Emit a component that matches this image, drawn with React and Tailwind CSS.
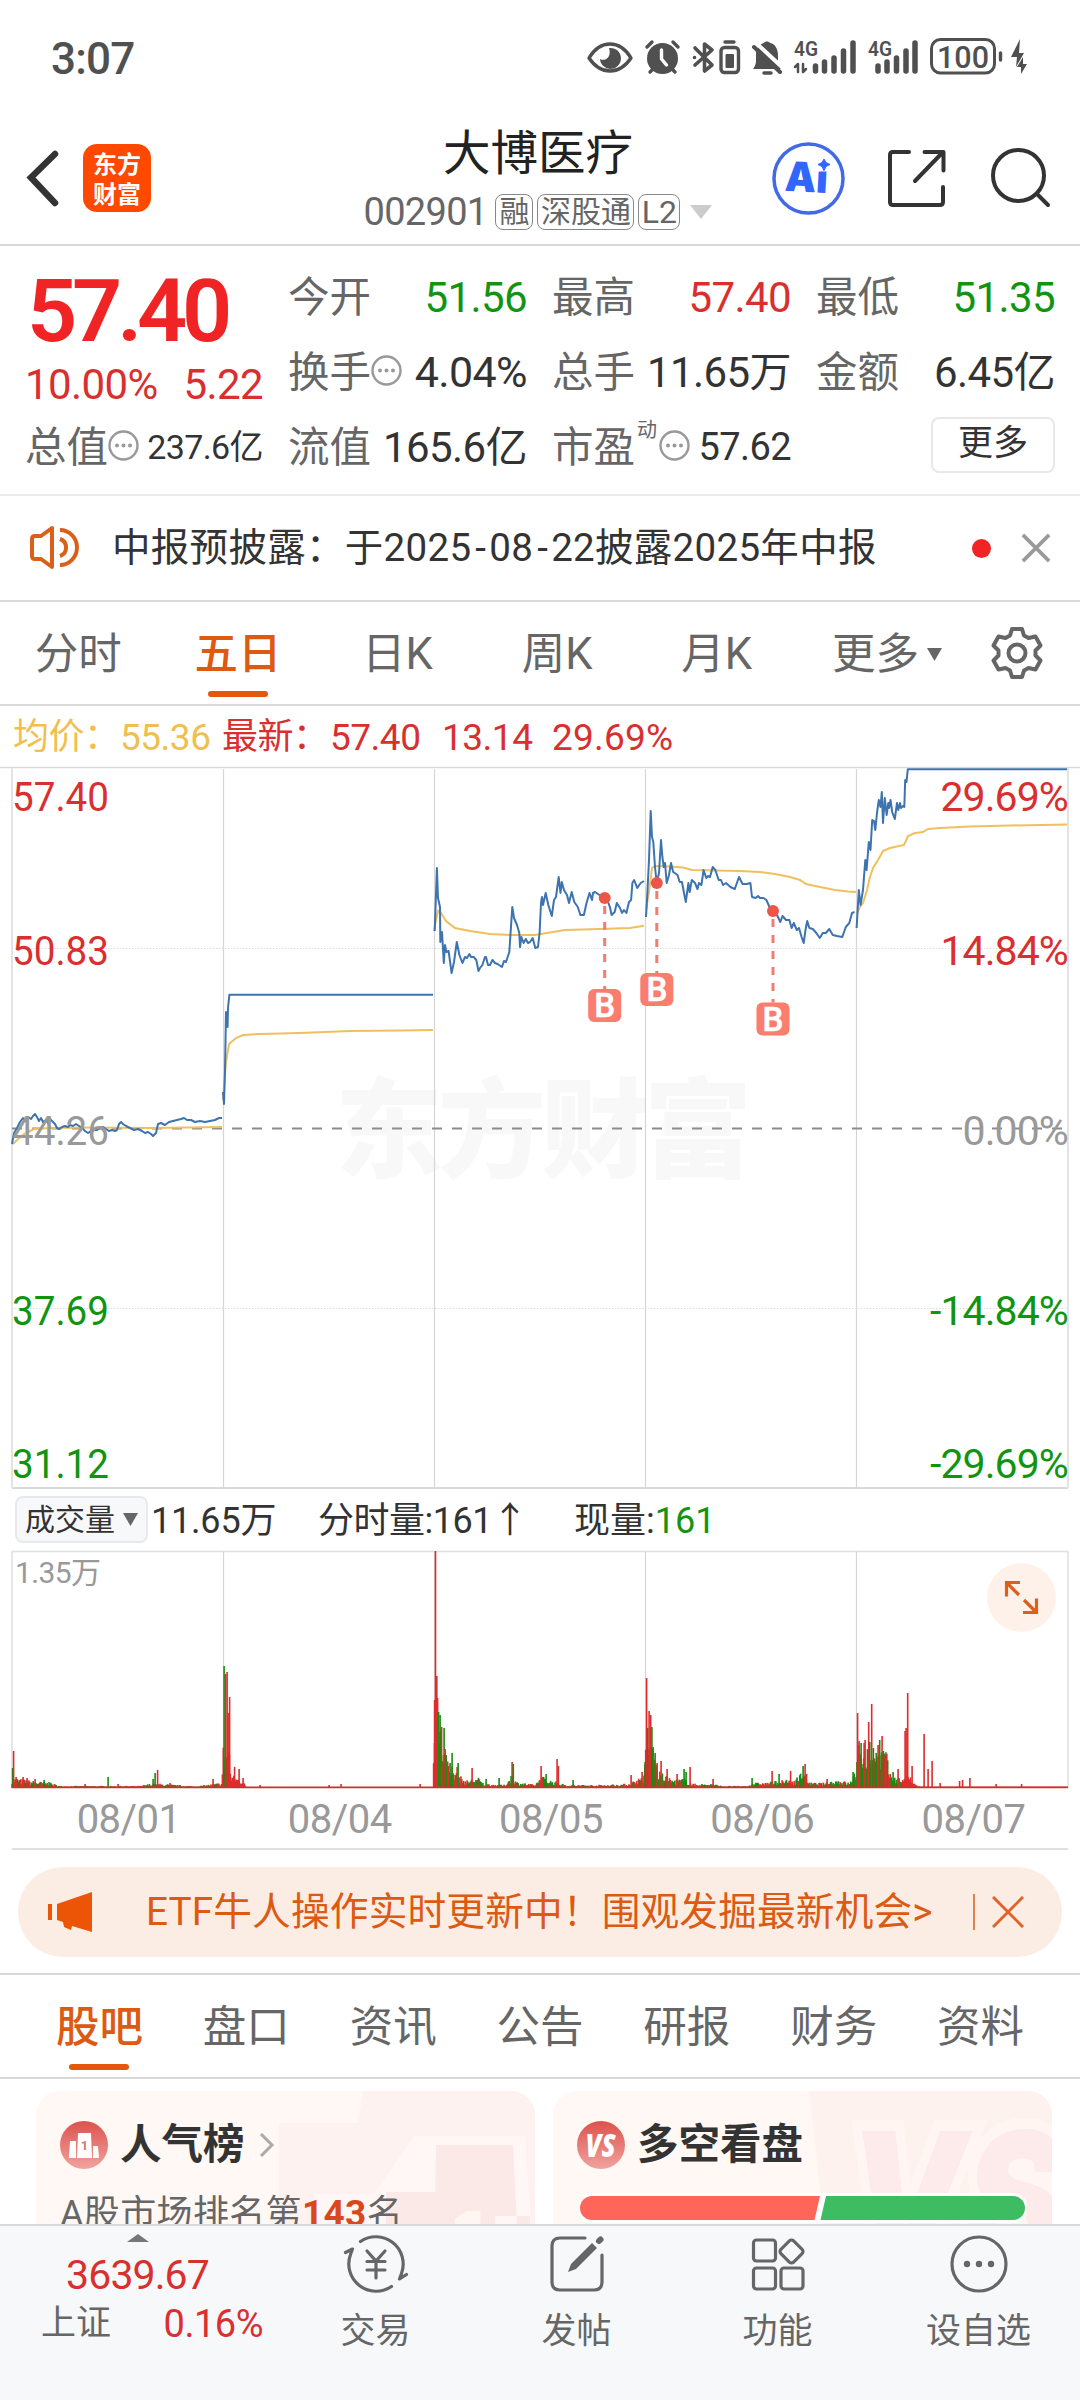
import clsx from 'clsx';

const RED = '#d92f2f';
const GREEN = '#119511';
const BLUE = '#3d74b0';
const YELLOW = '#f0bf5e';

const chartTabs = ['分时', '五日', '日K', '周K', '月K'];
const infoTabs = ['股吧', '盘口', '资讯', '公告', '研报', '财务', '资料'];
const dates = ['08/01', '08/04', '08/05', '08/06', '08/07'];

// price and average lines, one string per trading day
const priceLines = [
  '12,1144 14,1133 17,1128 20,1122 23,1118 25,1121 28,1117 31,1119 33,1116 35,1114 37,1117 39,1121 41,1118 43,1122 46,1120 48,1123 50,1119 52,1121 55,1124 57,1128 59,1129 62,1127 65,1126 68,1127 70,1125 73,1126 76,1124 79,1126 82,1128 85,1131 88,1133 91,1131 94,1130 97,1130 100,1128 103,1127 106,1129 109,1131 112,1130 115,1131 117,1130 119,1124 121,1122 123,1124 126,1126 130,1128 134,1130 138,1129 142,1131 145,1133 148,1132 151,1134 153,1136 156,1133 158,1124 161,1123 165,1125 169,1122 173,1121 177,1120 181,1119 184,1118 187,1120 191,1120 195,1122 200,1121 205,1122 210,1121 215,1120 219,1118 222,1118',
  '223,1092 224,1104 225,1070 226,1012 227.6,1027 228,1008 229.4,994.7 433,994.7',
  '434.7,931 436.9,868 438,898 440,907 440.3,942 442,932 443.8,963 445,945 446.4,952 448.6,951 451.6,973 454,962 456.8,942 459.4,955 462.4,963 465,957 467,958 469.4,954 471,957 473.7,957 476.3,960 478.5,971 480,968 482.4,965 485,957 486,957 488,965 490,965 492.4,960 495,963 497.6,964 502,967 504,961 506,962 509.3,952 512.3,907 514,918 517,925 519.3,933 520,947 521.4,937 523.6,943 525.8,939 528,943 530,942 532.7,938 535.3,948 538,947 539.6,933 541,903 542,897 543,905 545.7,893 548.3,905 551.8,916 554,900 556,897 558.7,877 560.5,893 561.8,882 564,890 567,895 569,903 571.7,892 574.3,902 577.8,907 580.4,915 583.9,915 586.5,903 589.5,893 592,900 593,893 595,892 599.5,895 603,897 607.3,900 609.9,907 611.6,915 614.7,912 616.8,903 620,908 622,913 624,910 626.4,913 629,902 631.1,900 632.4,883 634.2,880 637.2,888 640.7,883 644,881',
  '646,917 647,900 649,860 650.7,811 652,837 653.3,842 655,867 656.7,883 659,873 661,840 662.4,857 663.7,867 665,863 666.7,883 669,875 671,863 673.2,872 677.5,875 679.7,882 682,882 684,893 685.8,902 688.4,883 689.7,892 691.8,880 695,883 697.5,889 699,883 701.4,885 703.6,870 706.2,878 708,876 710,877 712.7,867 715.3,870 718.7,880 721,880 723,885 726,883 730.4,887 734.8,889 739,877 742.6,884 747,884 750.4,883 752,897 755.6,898 758,896 760,898 763.4,898 766.4,900 768.6,905 770.8,910 773.8,913 777,915 780.3,922 782.5,916 786,920 789.4,920 791.6,928 793.8,923 796.8,930 799,928 801.6,937 803.7,943 805.5,930 807.2,921 809.4,928 812.8,929 816.3,933 819.8,938 822.8,933 825.8,933 829.3,929 832.8,935 837,936 842.3,937 845.8,927 849.3,923 852,913 854.5,912',
  '856.6,928 858.8,890 860.5,905 863,890 865.3,860 866.6,870 868.8,842 870.5,850 872.2,820 874,821 875.3,830 877,813 878.8,800 880.5,807 881.8,792 883,823 884.8,798 886.6,815 888.3,803 889,808 890.5,800 892.2,812 894.8,819 897,803 898.3,810 900,803 901,808 903,806 904.3,807 905.2,780 906.5,782 907.8,769.2 1067,769.2',
];
const averageLines = [
  '13,1144 17,1140 24,1134 34,1129 50,1128 90,1127.5 150,1128 222,1127',
  '223,1100 226,1062 229,1044 236,1038 243,1035 260,1034 300,1033 350,1031 400,1030.5 433,1030',
  '434,931 436,920 438,911 441,913 446,921 455,928 470,931 490,934 511,935 535,935 553,932 565,930 600,929 630,928 644,925.7',
  '646,910 649,892 652,868 655,866 670,866.5 683,867.5 692,870 715,870.5 740,871 760,872 775,874 790,877 800,880 806,884 820,887 835,890 848,891.5 856,892',
  '857,913 861,905 863,903 867,890 870,877 873,868 878,860 883,851 890,848 904,845 908,836 915,833 923,832 928,829 940,828 970,826.5 1010,825.5 1067,824.5',
];

const buys = [
  { x: 604.7, y: 898, box: 989 },
  { x: 656.8, y: 883, box: 973 },
  { x: 773, y: 911, box: 1002.5 },
];

// volume: [x, typical height] between which the small bars are interpolated
const volumeBase = [
  [12, 10], [30, 7], [50, 5], [60, 2], [140, 2], [150, 4], [160, 4], [175, 3], [195, 1.5], [222, 5],
  [223, 40], [229, 40], [231, 13], [243, 7], [246, 1], [433, 1],
  [434, 70], [438, 70], [446, 32], [455, 15], [466, 7], [478, 10], [484, 4], [505, 3], [512, 14], [516, 6], [535, 3], [541, 12],
  [548, 8], [556, 6], [566, 3], [600, 3], [628, 4], [632, 6], [644, 12], [646, 45], [652, 42], [658, 16], [672, 8], [685, 9],
  [692, 4], [712, 4], [722, 2], [748, 2], [752, 5], [765, 5], [778, 7], [795, 8], [804, 18], [808, 5], [824, 5], [838, 8],
  [850, 5], [856, 20], [858, 40], [886, 36], [890, 13], [902, 9], [908, 14], [914, 4], [920, 1.2], [1068, 1.2],
];
const volumeSpikes = [
  [12.5, 20, 'g'], [13.5, 37, 'r'], [16, 11, 'r'], [23, 11, 'r'], [27, 10, 'r'], [35, 9, 'r'], [44, 8, 'g'], [49, 6, 'g'],
  [85, 4, 'r'], [108, 11, 'g'], [118, 4, 'r'], [153, 9, 'g'], [155, 15, 'g'], [157.5, 18, 'r'], [170, 5, 'r'], [213, 9, 'r'],
  [224, 122, 'g'], [225.5, 114, 'r'], [227, 116, 'r'], [228, 75, 'r'], [229.5, 91, 'r'], [234.5, 21, 'r'], [239, 19, 'r'], [243, 10, 'r'],
  [260, 3, 'r'], [329, 3, 'r'], [341, 4, 'r'], [420, 4, 'r'],
  [434.5, 88, 'r'], [435.4, 237, 'r'], [436.7, 112, 'r'], [437.5, 90, 'r'], [438.5, 76, 'g'], [440, 73, 'g'], [441.5, 61, 'r'],
  [444, 60, 'g'], [445, 39, 'r'], [446, 33, 'g'], [450, 25, 'g'], [452, 35, 'g'], [458, 25, 'g'], [457, 21, 'r'], [472, 20, 'r'],
  [486, 9, 'g'], [499, 10, 'g'], [512, 26, 'r'], [513.2, 24, 'g'], [541, 22, 'r'], [546, 14, 'g'], [557, 29, 'r'], [558.3, 22, 'r'],
  [573, 8, 'g'], [631, 13, 'r'], [642, 16, 'r'], [645, 26, 'g'],
  [646.5, 110, 'r'], [647.6, 60, 'g'], [649, 77, 'r'], [650.6, 73, 'r'], [651.8, 61, 'g'], [653, 41, 'g'], [655, 35, 'g'], [657, 25, 'r'],
  [661, 27, 'r'], [667, 19, 'r'], [677, 14, 'r'], [684, 19, 'g'], [686, 16, 'g'], [690, 21, 'r'], [713, 9, 'r'], [752, 10, 'g'],
  [772, 17, 'r'], [779, 14, 'g'], [790.5, 17, 'r'], [803, 22, 'g'], [805, 24, 'r'], [806.5, 14, 'r'], [827, 9, 'r'], [853, 16, 'g'],
  [857.5, 75, 'r'], [859, 47, 'r'], [861, 45, 'g'], [864, 45, 'r'], [865, 48, 'r'], [868.6, 66, 'r'], [869.7, 46, 'g'], [871.6, 84, 'r'],
  [873.3, 40, 'g'], [878, 43, 'r'], [879.6, 48, 'g'], [882, 52, 'r'], [883.3, 37, 'g'], [885, 29, 'r'], [893, 16, 'g'], [898, 19, 'r'],
  [905, 57, 'r'], [906, 60, 'r'], [907.6, 95, 'r'], [912, 22, 'r'], [924, 54, 'r'], [928, 19, 'r'], [932, 27, 'r'],
  [940, 5, 'r'], [959.5, 7, 'r'], [962.5, 8, 'r'], [969.8, 10, 'r'], [996, 4, 'r'], [1021.5, 4, 'r'],
];

function smallBars() {
  const bars = [];
  let seed = 7;
  const rand = () => {
    seed = (seed * 16807) % 2147483647;
    return seed / 2147483647;
  };
  for (let x = 12; x < 1067; x += 0.88) {
    const i = volumeBase.findIndex(([bx]) => bx > x);
    const [x0, h0] = volumeBase[i - 1];
    const [x1, h1] = volumeBase[i];
    const base = h0 + ((h1 - h0) * (x - x0)) / (x1 - x0);
    const onlyRed = (x > 228 && x < 436) || x > 903;
    const h = base < 1.5 ? base : Math.max(1.2, base * (0.4 + 0.7 * rand()));
    bars.push([x, h, onlyRed || rand() > 0.5 ? 'r' : 'g']);
  }
  return bars;
}

const volumeBars = [...smallBars(), ...volumeSpikes];

function StatusIcons() {
  return (
    <svg width="460" height="44" viewBox="580 36 460 44" fill="none" stroke="#505050" strokeWidth="3.4" strokeLinecap="round" strokeLinejoin="round">
      <path d="M589 58C595 48 602 44 610 44s15 4 21 14c-6 9-13 13-21 13s-15-4-21-13z" />
      <path d="M609 48a10.500 10.500 0 1 1-9 11c5 3 12-2 9-11z" fill="#505050" stroke="none" />
      <circle cx="662.500" cy="58.500" r="15.500" fill="#505050" stroke="none" />
      <path d="M647 47l5-5M678 47l-5-5M650 72l3-3M675 72l-3-3" />
      <path d="M661.500 50v9l5 6" stroke="#fff" />
      <path d="M695 48l17 17-7.500 6V44l7.500 6-17 15M694.500 57.500h.1" strokeWidth="3.600" />
      <rect x="721" y="47.500" width="17.500" height="25" rx="3.500" />
      <rect x="725.500" y="54" width="8.500" height="14" rx="1" fill="#505050" stroke="none" />
      <path d="M725 42h9" />
      <path d="M753 69h28c-2-3-3-5-3-8v-6c0-7-4-12-8-12-1-2-5-2-6 0-4 1-8 5-8 12v6c0 3-1 5-3 8z" fill="#505050" stroke="none" />
      <path d="M755 42l28 26" stroke="#fff" strokeWidth="4" />
      <path d="M754 47l26 25" strokeWidth="4" />
      <path d="M764 73h7" strokeWidth="3.500" />
      <text x="794" y="56" fontSize="20" fontWeight="600" fill="#505050" stroke="none" textLength="24" lengthAdjust="spacingAndGlyphs">4G</text>
      <path d="M798 72v-8l-3 3M803 64v8l3-3" strokeWidth="2.500" />
      <path d="M815.500 71v-5M824.500 71v-9M834 71V58M843.500 71V51M853 71V43" strokeWidth="5.500" />
      <text x="868" y="56" fontSize="20" fontWeight="600" fill="#505050" stroke="none" textLength="24" lengthAdjust="spacingAndGlyphs">4G</text>
      <path d="M878 71v-5M887 71v-9M896.500 71V58M906 71V51M915 71V43" strokeWidth="5.500" />
      <rect x="931.500" y="39.500" width="63" height="33.500" rx="9" strokeWidth="3" />
      <text x="937" y="68" fontSize="32" fontWeight="500" fill="#505050" stroke="none" textLength="52" lengthAdjust="spacingAndGlyphs">100</text>
      <path d="M1000.500 53v7" />
      <path d="M1020 39l-9 18h6l-1 10 8-14h-5zM1023 57l-6 10h4l0 7 6-10h-4z" fill="#505050" stroke="none" />
    </svg>
  );
}

function Dots() {
  return (
    <svg width="31" height="31" viewBox="0 0 31 31" fill="none" className="shrink-0">
      <circle cx="15.500" cy="15.500" r="14" stroke="#999" strokeWidth="2.400" />
      <circle cx="9" cy="15.500" r="2" fill="#999" />
      <circle cx="15.500" cy="15.500" r="2" fill="#999" />
      <circle cx="22" cy="15.500" r="2" fill="#999" />
    </svg>
  );
}

function Cell({ label, dots, sup, children, className }) {
  return (
    <div className="flex h-[75px] items-center justify-between whitespace-nowrap">
      <div className="flex items-center text-[41.5px] leading-none tracking-normal text-[#666]">
        {label}
        {sup && <span className="-mt-9 ml-0.5 text-[20px]">{sup}</span>}
        {dots && <span className={clsx('-mt-1', sup && 'ml-0.5')}><Dots /></span>}
      </div>
      <div className={className}>{children}</div>
    </div>
  );
}

function Header() {
  return (
    <header className="flex h-[131px] shrink-0 items-start border-b-2 border-[#d9d9d9]">
      <div className="flex w-[330px] items-center pt-[29px] pl-[25px]">
        <svg width="36" height="60" viewBox="0 0 36 60" fill="none" stroke="#333" strokeWidth="6.500" strokeLinecap="round">
          <path d="M30 6L6 29.500L30 55" />
        </svg>
        <div className="ml-[22px] flex size-[68px] items-center justify-center rounded-[14px] bg-[#ff4800]">
          <p className="w-12 font-[Noto_Sans_CJK_SC] text-[24px] leading-[30px] font-bold break-all text-white">东方财富</p>
        </div>
      </div>
      <div className="flex w-[420px] flex-col items-center pr-[4px]">
        <h1 className="mt-[13px] text-[47.5px] leading-[52px] text-[#222]">大博医疗</h1>
        <div className="mt-[13px] flex items-center gap-[4px] text-[30px] leading-none text-[#666]">
          <span className="mr-1 text-[38px] tracking-[-0.7px]">002901</span>
          <span className="flex h-9 w-[38px] items-center justify-center rounded-lg border border-[#888]">融</span>
          <span className="flex h-9 w-[97px] items-center justify-center rounded-lg border border-[#888]">深股通</span>
          <span className="flex h-9 w-[42px] items-center justify-center rounded-lg border border-[#888] text-[32px]">L2</span>
          <svg width="22" height="14" className="ml-[6px]"><path d="M0 0h22L11 14z" fill="#ccc" /></svg>
        </div>
      </div>
      <svg width="330" height="130" viewBox="750 115 330 130" fill="none">
        <circle cx="808.500" cy="178.500" r="34.500" stroke="#4169e8" strokeWidth="3.500" />
        <text x="785" y="192" fontFamily="Inter" fontSize="41" fontWeight="900" fill="#3366ff" textLength="43" lengthAdjust="spacingAndGlyphs" transform="rotate(3 808 178)">Ai</text>
        <rect x="816" y="156" width="16" height="15.500" fill="#fff" />
        <path d="M824 159l2 3.500 4 2-4 2-2 4-2-4-4-2 4-2z" fill="#3366ff" stroke="#3366ff" />
        <g stroke="#333" strokeWidth="4" strokeLinecap="round" strokeLinejoin="round">
          <path d="M909 152h-16q-3 0-3 3v47q0 3 3 3h47q3 0 3-3v-15M924.500 152h19v18.500M943 152l-28 29" />
          <circle cx="1018.500" cy="175.500" r="25.500" />
          <path d="M1037 194l11 11" />
        </g>
      </svg>
    </header>
  );
}

function Quote() {
  return (
    <section className="grid h-[250px] shrink-0 grid-cols-[238px_239px_239px_239px] content-start gap-x-[25px] border-b-2 border-[#ededed] pt-[14px] pl-[25px] text-[42px] tracking-[-0.6px] text-[#333]">
      <div>
        <div className="flex h-[98px] items-center pt-[4px] pl-0.5 text-[88px] leading-none font-semibold tracking-[-5.2px] text-[#f02424]">57.40</div>
        <div className="flex h-[52px] items-center justify-between pt-0.5 leading-none text-[#d92f2f]">
          <span className="tracking-[-0.6px]">10.00%</span>
          <span>5.22</span>
        </div>
        <Cell label="总值" dots className="text-[34px]">237.6亿</Cell>
      </div>
      <div>
        <Cell label="今开" className="text-[#119511]">51.56</Cell>
        <Cell label="换手" dots className="text-[43px]">4.04%</Cell>
        <Cell label="流值">165.6亿</Cell>
      </div>
      <div>
        <Cell label="最高" className="text-[#d92f2f]">57.40</Cell>
        <Cell label="总手">11.65万</Cell>
        <Cell label="市盈" sup="动" dots className="text-[38px]">57.62</Cell>
      </div>
      <div>
        <Cell label="最低" className="text-[#119511]">51.35</Cell>
        <Cell label="金额">6.45亿</Cell>
        <div className="flex h-[69px] items-center justify-end">
          <button className="h-[56px] w-[124px] rounded-lg border-2 border-[#e8e8e8] pb-0.5 text-[35px] leading-none tracking-normal text-[#333]">更多</button>
        </div>
      </div>
    </section>
  );
}

function Notice() {
  return (
    <section className="flex h-[106px] shrink-0 items-center border-b-2 border-[#d9d9d9] pl-[28px]">
      <svg width="52" height="48" viewBox="28 524 52 48" fill="none" stroke="#d9601a" strokeWidth="4" strokeLinejoin="round">
        <path d="M52 528v39l-11-8h-6q-3 0-3-3v-17q0-3 3-3h6zM60 530a17 17.500 0 0 1 0 35M60 539a9 9 0 0 1 0 17" />
      </svg>
      <p className="ml-[32px] w-[802px] text-[38.5px] tracking-[0.3px] whitespace-nowrap text-[#333]">
        中报预披露：于2025<span className="mr-[3px] ml-[4px]">-</span>08<span className="mr-[3px] ml-[4px]">-</span>22披露2025年中报
      </p>
      <span className="ml-[58px] size-[19px] rounded-full bg-[#f02424]" />
      <svg width="30" height="30" viewBox="0 0 32 32" className="ml-[30px]" stroke="#999" strokeWidth="3.800">
        <path d="M2 2l28 28M30 2L2 30" />
      </svg>
    </section>
  );
}

function ChartTabs() {
  return (
    <nav className="flex h-[104px] shrink-0 items-center border-b-2 border-[#d9d9d9] text-[43.5px] text-[#666]">
      {chartTabs.map((t) => (
        <div key={t} className={clsx('relative flex h-full w-[159.600px] items-center justify-center pt-[3px] pr-[3px]', t === '五日' && 'font-medium text-[#dd5a12]')}>
          {t}
          {t === '五日' && <span className="absolute bottom-[7px] h-1.5 w-[60px] rounded-full bg-[#e2580d]" />}
        </div>
      ))}
      <div className="ml-[34px] flex items-center gap-[8px] pt-[3px]">
        更多
        <svg width="15" height="13"><path d="M0 0h15L7.500 13z" fill="#666" /></svg>
      </div>
      <svg width="52" height="54" viewBox="0 0 52 54" className="ml-[49px]" fill="none" stroke="#666" strokeWidth="4" strokeLinejoin="round">
        <path d="M21 3h10l2 6.500 4.500 2.500 7-1.500 5 9-5 5v5l5 5-5 9-7-1.500L33 44.500 31 51H21l-2-6.500-4.500-2.500-7 1.500-5-9 5-5v-5l-5-5 5-9 7 1.500L19 9.500z" />
        <circle cx="26" cy="27" r="8.500" />
      </svg>
    </nav>
  );
}

function PriceChart() {
  const labels = [
    [796, '57.40', '29.69%', RED],
    [950, '50.83', '14.84%', RED],
    [1130, '44.26', '0.00%', '#999'],
    [1310, '37.69', '-14.84%', GREEN],
    [1463, '31.12', '-29.69%', GREEN],
  ];
  return (
    <svg width="1080" height="723" viewBox="0 766 1080 723" fill="none" className="block shrink-0">
      <text x="335" y="1169" fontFamily="Noto Sans CJK SC" fontSize="108" fontWeight="900" fill="#f8f8f8" textLength="417">东方财富</text>
      <path d="M0 767.500h1080" stroke="#d9d9d9" strokeWidth="1.500" />
      <path d="M12 1488h1056" stroke="#d9d9d9" strokeWidth="2" />
      <path d="M12 768v720M1068 768v720" stroke="#e3e3e3" strokeWidth="2" />
      <path d="M223.500 769v719M434.500 769v719M645.500 769v719M856.500 769v719" stroke="#d6d6d6" strokeWidth="1.200" />
      <path d="M12 948.500h1056M12 1308.500h1056" stroke="#dcdcdc" strokeDasharray="1.500 1.500" />
      <path d="M12 1128.500h1056" stroke="#8c8c8c" strokeWidth="1.800" strokeDasharray="10 10" />
      {averageLines.map((p) => <polyline key={p} points={p} stroke={YELLOW} strokeWidth="2" />)}
      {priceLines.map((p) => <polyline key={p} points={p} stroke={BLUE} strokeWidth="2" strokeLinejoin="round" />)}
      {labels.map(([y, left, right, color]) => (
        <g key={left} fill={color} fontSize="41">
          <text x="12" y={y + 15} textLength="97" lengthAdjust="spacingAndGlyphs">{left}</text>
          <text x="1068" y={y + 15} textAnchor="end" letterSpacing="-0.9">{right}</text>
        </g>
      ))}
      {buys.map(({ x, y, box }) => (
        <g key={x}>
          <circle cx={x} cy={y} r="6" fill="#ee5548" />
          <path d={`M${x} ${y + 6}V${box}`} stroke="#f47b6f" strokeWidth="3" strokeDasharray="8 8" strokeDashoffset="-2" />
          <rect x={x - 16.500} y={box} width="33" height="33" rx="6" fill="#fb7d6d" />
          <text x={x} y={box + 28} textAnchor="middle" fontSize="33" fontWeight="500" fill="#fff" stroke="#fff" strokeWidth="0.600">B</text>
        </g>
      ))}
    </svg>
  );
}

function VolumeChart() {
  return (
    <svg width="1080" height="240" viewBox="0 1550 1080 240" fill="none" className="block shrink-0">
      <path d="M12 1551.500h1056M12 1551v237M1068 1551v237" stroke="#e0e0e0" strokeWidth="1.600" />
      <path d="M223.500 1551v237M434.500 1551v237M645.500 1551v237M856.500 1551v237" stroke="#d6d6d6" strokeWidth="1.200" />
      {volumeBars.map(([x, h, c], i) => (
        <rect key={i} x={x - 0.7} y={1788 - h} width="1.600" height={h} fill={c === 'r' ? '#de2c2c' : '#168c10'} />
      ))}
      <path d="M12 1787.300h1056" stroke="#c93030" strokeWidth="1.800" />
      <text x="15" y="1583" fontSize="30" fill="#999" textLength="86">1.35万</text>
      <circle cx="1021.500" cy="1597.500" r="34.500" fill="#fef1ea" />
      <path d="M1020 1582.500h-13.500v14M1007 1583l12 12M1023 1612.500h13.500v-14M1036 1612l-12-12" stroke="#dc5f1a" strokeWidth="3.200" />
    </svg>
  );
}

function Banner() {
  return (
    <section className="flex h-[125px] shrink-0 items-start border-b-2 border-[#d9d9d9] px-[18px] pt-[17px]">
      <div className="flex h-[90px] w-[1044px] items-center rounded-full bg-[#fcede4] pl-[30px] text-[#dc5a12]">
        <svg width="44" height="40" viewBox="48 1892 44 40" fill="#ec5406">
          <path d="M48 1904h4v16h-4zM57 1904l35-12v40l-20-6-1 4-7-3-1-5-6-2z" />
        </svg>
        <p className="ml-[54px] w-[793px] text-[38.7px] tracking-[0.15px] whitespace-nowrap">
          ETF牛人操作实时更新中！围观发掘最新机会&gt;
        </p>
        <span className="ml-[34px] h-9 w-[2px] bg-[#dd8350]" />
        <svg width="32" height="32" viewBox="0 0 32 32" className="ml-[17px]" stroke="#e0642a" strokeWidth="3">
          <path d="M1 1l30 30M31 1L1 31" />
        </svg>
      </div>
    </section>
  );
}

function Cards() {
  return (
    <section className="flex h-[145px] shrink-0 gap-[18px] overflow-hidden px-[36px] pt-[12px]">
      <div className="relative h-[220px] w-[499px] shrink-0 overflow-hidden rounded-[24px] bg-[#fff8f5] pt-[30px] pl-[24px]">
        <svg className="absolute top-0 left-0" width="499" height="134" viewBox="36 2091 499 134">
          <path d="M363 2091h172v134H279v-102h79z" fill="#fef2f0" />
          <path d="M414 2136h122l8 89H314v-31h60z" fill="#fff7f5" />
          <path d="M436 2145h77l4 80h-82zM386 2192h50v33h-50zM530 2216h-35v9h35z" fill="#fbe9e7" />
          <path d="M535 2136l-10 0 6 89h10z" fill="#fef2f0" />
          <text x="452" y="2262" fontFamily="Inter" fontSize="70" fontWeight="900" fill="#fff5f3">1</text>
        </svg>
        <div className="relative flex items-center">
          <svg width="48" height="48" viewBox="0 0 48 48">
            <defs>
              <linearGradient id="badge" x1="0" y1="0" x2="0" y2="1">
                <stop offset="0" stopColor="#dc524d" />
                <stop offset="1" stopColor="#f0a39f" />
              </linearGradient>
            </defs>
            <circle cx="24" cy="24" r="24" fill="url(#badge)" />
            <path d="M9 37l1-17h6v17zM17 37l1-25h13l1 25zM33 37V25h5l1 12z" fill="#fff" />
            <text x="24.500" y="29" textAnchor="middle" fontSize="13" fontWeight="700" fill="#e2706c">1</text>
          </svg>
          <h2 className="ml-[12px] text-[41.5px] leading-[48px] font-semibold text-[#333]">人气榜</h2>
          <svg width="16" height="26" viewBox="0 0 16 26" className="ml-[14px]" fill="none" stroke="#aaa" strokeWidth="3"><path d="M2 2l11 11L2 24" /></svg>
        </div>
        <p className="relative mt-[20px] text-[36px] leading-[50px] tracking-[0.35px] whitespace-nowrap text-[#666]">
          A股市场排名第<b className="text-[37px] text-[#d9481c]">143</b>名
        </p>
      </div>
      <div className="relative h-[220px] w-[499px] shrink-0 overflow-hidden rounded-[24px] bg-[#fff8f5] pt-[30px] pl-[24px]">
        <svg className="absolute top-0 left-0" width="499" height="134" viewBox="553 2091 499 134">
          <path d="M809 2091h243v134H824z" fill="#fef2ef" />
          <text x="848" y="2262" fontFamily="Inter" fontSize="180" fontWeight="900" fontStyle="italic" fill="#fcebea" stroke="#fff6f3" strokeWidth="22" paintOrder="stroke" textLength="215" lengthAdjust="spacingAndGlyphs">VS</text>
        </svg>
        <div className="relative flex items-center">
          <svg width="48" height="48" viewBox="0 0 48 48">
            <circle cx="24" cy="24" r="24" fill="url(#badge)" />
            <text x="23.500" y="36" textAnchor="middle" fontFamily="Open Sans" fontSize="32" fontWeight="800" fontStyle="italic" fill="#fff" textLength="30" lengthAdjust="spacingAndGlyphs">VS</text>
          </svg>
          <h2 className="ml-[12px] text-[41.5px] leading-[48px] font-semibold text-[#333]">多空看盘</h2>
        </div>
        <svg width="449" height="30" viewBox="578 2193 449 30" className="relative mt-[24px] ml-[1px]">
          <rect x="578" y="2193" width="449" height="30" rx="14" fill="#fff" />
          <path d="M592 2196h228l-5.500 24H592a12 12 0 0 1 0-24z" fill="#ff6659" />
          <path d="M826 2196h187a12 12 0 0 1 0 24H820.500z" fill="#3dbc61" />
        </svg>
      </div>
    </section>
  );
}

function NavItem({ label, children }) {
  return (
    <div className="flex w-[201px] flex-col items-center pt-[6px] text-[35px] leading-[48px] text-[#666]">
      <svg width="66" height="64" viewBox="-33 -32 66 64" fill="none" stroke="#666" strokeWidth="3.200" strokeLinecap="round">
        {children}
      </svg>
      <span className="mt-[12px]">{label}</span>
    </div>
  );
}

function BottomNav() {
  return (
    <footer className="flex h-[176px] shrink-0 border-t-2 border-[#d9d9d9] bg-[#f7f8fa]">
      <div className="flex w-[275px] shrink-0 flex-col items-center text-[#d92f2f]">
        <svg width="22" height="8" className="mt-[8px]"><path d="M0 8L11 0l11 8z" fill="#777" /></svg>
        <div className="mt-[9px] text-[41px] leading-[48px] tracking-[-0.9px]">3639.67</div>
        <div className="flex w-full items-center justify-between pr-[12px] pl-[41px] text-[38px] leading-[50px]">
          <span className="text-[35px] text-[#666]">上证</span>
          <span className="tracking-[-0.5px]">0.16%</span>
        </div>
      </div>
      <NavItem label="交易">
        <path d="M-15.500-22.500A27.300 27.300 0 0 1 25.500 9.500l-2 5.500 7-4.500M15.500 22.500A27.300 27.300 0 0 1-25.500-9.500l2-5.500-7 3.500" strokeLinejoin="round" />
        <path d="M-9-13L0-3l9-10M0-3v17M-9-2.500H9M-9 6H9" />
      </NavItem>
      <NavItem label="发帖">
        <path d="M8-26h-25q-8 0-8 8v36q0 8 8 8h34q8 0 8-8V-9" />
        <path d="M-9 8l3-8L15-21l5 5L-1 5z" fill="#666" stroke="none" />
        <path d="M22-23l1.500-1.500" strokeWidth="6" />
      </NavItem>
      <NavItem label="功能">
        <rect x="-24.500" y="-24" width="22" height="21" rx="3" />
        <rect x="-24.500" y="4" width="22" height="21" rx="3" />
        <rect x="3" y="4" width="22" height="21" rx="3" />
        <rect x="4.500" y="-21.500" width="18" height="18" rx="3" transform="rotate(45 13.500 -12.500)" />
      </NavItem>
      <NavItem label="设自选">
        <circle r="27" />
        <g fill="#666" stroke="none">
          <circle cx="-12" r="3.200" />
          <circle r="3.200" />
          <circle cx="12" r="3.200" />
        </g>
      </NavItem>
    </footer>
  );
}

export default function App() {
  return (
    <div className="flex h-[2400px] w-[1080px] flex-col overflow-hidden bg-white font-[Roboto,'Noto_Sans_CJK_SC',sans-serif]">
      <div className="flex h-[115px] shrink-0 items-center justify-between pr-[40px] pl-[51px]">
        <span className="pt-0.5 text-[44px] font-medium tracking-[-0.8px] text-[#505050]">3:07</span>
        <StatusIcons />
      </div>
      <Header />
      <Quote />
      <Notice />
      <ChartTabs />
      <div className="flex h-[60px] shrink-0 items-center pt-[2px] pl-[13px] text-[37px] leading-none tracking-[-0.5px] whitespace-nowrap text-[#d92f2f]">
        <span className="w-[107px] text-[36px] text-[#f0bf4e]">均价：</span>
        <span className="w-[102px] text-[#f0bf4e]">55.36</span>
        <span className="w-[108px] text-[36px]">最新：</span>
        <span className="w-[112px]">57.40</span>
        <span className="w-[110px]">13.14</span>
        <span className="tracking-[0.2px]">29.69%</span>
      </div>
      <PriceChart />
      <div className="flex h-[61px] shrink-0 items-center pl-[15px] text-[36px] leading-none whitespace-nowrap text-[#333]">
        <div className="mr-[3px] flex h-[47px] w-[133px] items-center justify-center gap-2 rounded-lg border-2 border-[#e8e9ec] bg-[#f7f8fa] text-[30px]">
          成交量
          <svg width="15" height="13"><path d="M0 0h15L7.500 13z" fill="#666" /></svg>
        </div>
        <span className="w-[167px] pt-[2px] tracking-[-0.2px]">11.65万</span>
        <span className="w-[256px] pt-[2px] tracking-[-0.5px]">分时量:161↑</span>
        <span className="pt-[2px]">现量:<span className="text-[#119511]">161</span></span>
      </div>
      <VolumeChart />
      <div className="mx-[12px] flex h-[60px] shrink-0 items-center border-b-2 border-[#e0e0e0] pt-[2px] text-[40px] tracking-[-0.5px] text-[#999]">
        {dates.map((d) => <span key={d} className="flex-1 pl-[22px] text-center">{d}</span>)}
      </div>
      <Banner />
      <nav className="flex h-[104px] shrink-0 items-center border-b-2 border-[#d9d9d9] px-[26px] text-[43.5px] text-[#666]">
        {infoTabs.map((t, i) => (
          <div key={t} className={clsx('relative flex h-full flex-1 items-center justify-center pt-[4px]', i === 0 && 'font-medium text-[#dd5a12]')}>
            {t}
            {i === 0 && <span className="absolute bottom-[7px] h-1.5 w-[60px] rounded-full bg-[#e2580d]" />}
          </div>
        ))}
      </nav>
      <Cards />
      <BottomNav />
    </div>
  );
}
